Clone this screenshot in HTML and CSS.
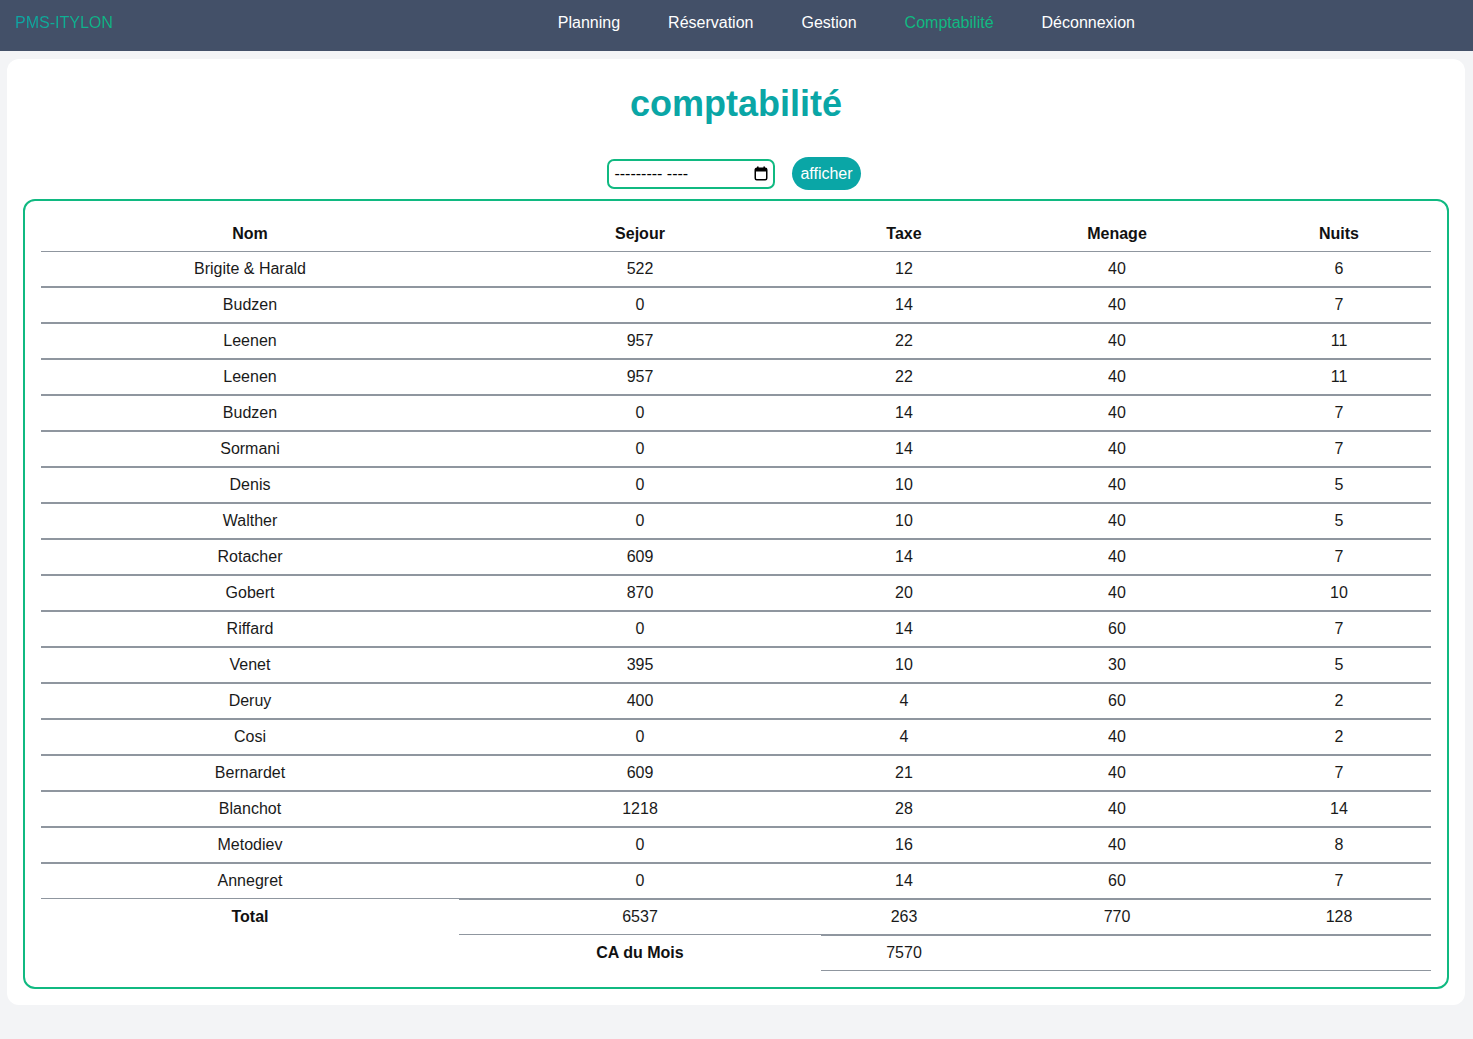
FILE: index.html
```html
<!DOCTYPE html>
<html lang="fr">
<head>
<meta charset="utf-8">
<title>PMS-ITYLON - comptabilité</title>
<link rel="stylesheet" href="styles.css">
</head>
<body>
<nav class="topbar">
  <a class="brand" href="#">PMS-ITYLON</a>
  <ul class="menu">
    <li><a href="#">Planning</a></li>
    <li><a href="#">Réservation</a></li>
    <li><a href="#">Gestion</a></li>
    <li><a class="active" href="#">Comptabilité</a></li>
    <li><a href="#">Déconnexion</a></li>
  </ul>
</nav>
<main class="page">
  <section class="card">
    <h1 class="title">comptabilité</h1>
    <form class="filter">
      <label class="month">
        <input class="month-text" type="text" value="--------- ----" aria-label="mois">
        <svg class="cal" width="14" height="15" viewBox="0 0 14 15" aria-hidden="true">
          <rect x="3" y="0.5" width="1.6" height="3" fill="#000"/>
          <rect x="9.4" y="0.5" width="1.6" height="3" fill="#000"/>
          <rect x="1.25" y="2.25" width="11.5" height="11.5" rx="1.5" fill="none" stroke="#000" stroke-width="1.5"/>
          <rect x="1.5" y="2.5" width="11" height="3" fill="#000"/>
        </svg>
      </label>
      <button class="btn" type="button">afficher</button>
    </form>
    <div class="box">
      <table class="grid">
        <thead>
          <tr>
            <th class="c-nom">Nom</th>
            <th class="c-sejour">Sejour</th>
            <th class="c-taxe">Taxe</th>
            <th class="c-menage">Menage</th>
            <th class="c-nuits">Nuits</th>
          </tr>
        </thead>
        <tbody>
          <tr><td>Brigite &amp; Harald</td><td>522</td><td>12</td><td>40</td><td>6</td></tr>
          <tr><td>Budzen</td><td>0</td><td>14</td><td>40</td><td>7</td></tr>
          <tr><td>Leenen</td><td>957</td><td>22</td><td>40</td><td>11</td></tr>
          <tr><td>Leenen</td><td>957</td><td>22</td><td>40</td><td>11</td></tr>
          <tr><td>Budzen</td><td>0</td><td>14</td><td>40</td><td>7</td></tr>
          <tr><td>Sormani</td><td>0</td><td>14</td><td>40</td><td>7</td></tr>
          <tr><td>Denis</td><td>0</td><td>10</td><td>40</td><td>5</td></tr>
          <tr><td>Walther</td><td>0</td><td>10</td><td>40</td><td>5</td></tr>
          <tr><td>Rotacher</td><td>609</td><td>14</td><td>40</td><td>7</td></tr>
          <tr><td>Gobert</td><td>870</td><td>20</td><td>40</td><td>10</td></tr>
          <tr><td>Riffard</td><td>0</td><td>14</td><td>60</td><td>7</td></tr>
          <tr><td>Venet</td><td>395</td><td>10</td><td>30</td><td>5</td></tr>
          <tr><td>Deruy</td><td>400</td><td>4</td><td>60</td><td>2</td></tr>
          <tr><td>Cosi</td><td>0</td><td>4</td><td>40</td><td>2</td></tr>
          <tr><td>Bernardet</td><td>609</td><td>21</td><td>40</td><td>7</td></tr>
          <tr><td>Blanchot</td><td>1218</td><td>28</td><td>40</td><td>14</td></tr>
          <tr><td>Metodiev</td><td>0</td><td>16</td><td>40</td><td>8</td></tr>
          <tr><td>Annegret</td><td>0</td><td>14</td><td>60</td><td>7</td></tr>
        </tbody>
        <tfoot>
          <tr><th>Total</th><td>6537</td><td>263</td><td>770</td><td>128</td></tr>
          <tr><th></th><th>CA du Mois</th><td>7570</td><td></td><td></td></tr>
        </tfoot>
      </table>
    </div>
  </section>
</main>
</body>
</html>
```

FILE: styles.css
```css
html, body {
  margin: 0;
  padding: 0;
}

body {
  background: #f3f4f6;
  font-family: "Liberation Sans", Arial, sans-serif;
  font-size: 16px;
  color: #111;
}

.topbar {
  display: flex;
  align-items: flex-start;
  height: 51px;
  box-sizing: border-box;
  padding: 14px 15px 0;
  background: #435068;
}

.brand {
  font-size: 16px;
  line-height: 18px;
  text-decoration: none;
  background: linear-gradient(90deg, #0ea5a5 0%, #10b981 100%);
  -webkit-background-clip: text;
  background-clip: text;
  color: transparent;
}

.menu {
  display: flex;
  list-style: none;
  margin: 0 0 0 421px;
  padding: 0;
}

.menu a {
  display: block;
  padding: 0 24px;
  line-height: 18px;
  color: #ffffff;
  text-decoration: none;
}

.menu a.active {
  color: #10b981;
}

.page {
  padding: 8px 8px 0 7px;
}

.card {
  background: #ffffff;
  border-radius: 12px;
  padding: 16px;
}

.title {
  margin: 8px 0 0;
  text-align: center;
  font-size: 36px;
  line-height: 41px;
  font-weight: 700;
  color: #0aa6a6;
}

.filter {
  display: flex;
  justify-content: center;
  align-items: center;
  gap: 17px;
  margin: 33px 0 9px;
  padding-right: 4px;
}

.month {
  box-sizing: border-box;
  display: flex;
  align-items: center;
  width: 168px;
  height: 30px;
  border: 2px solid #10b981;
  border-radius: 7px;
  padding: 0 5px 0 5px;
  background: #fff;
}

.month-text {
  flex: 1;
  min-width: 0;
  border: none;
  outline: none;
  padding: 0;
  margin: 0;
  font-family: "Liberation Sans", Arial, sans-serif;
  font-size: 16px;
  color: #000;
  background: transparent;
}

.cal {
  flex: none;
  display: block;
}

.btn {
  box-sizing: border-box;
  height: 33px;
  padding: 0 8px;
  border: none;
  border-radius: 9999px;
  background: #0aa6a6;
  color: #ffffff;
  font-family: "Liberation Sans", Arial, sans-serif;
  font-size: 16px;
}

.box {
  border: 2px solid #10b981;
  border-radius: 12px;
  padding: 16px;
}

.grid {
  width: 100%;
  border-collapse: separate;
  border-spacing: 0;
  table-layout: fixed;
}

.grid th,
.grid td {
  padding: 8px 0;
  line-height: 18px;
  text-align: center;
  font-size: 16px;
}

.grid th {
  font-weight: 700;
  color: #111;
}

.grid td {
  border-top: 1px solid #8f969f;
  border-bottom: 1px solid #8f969f;
  color: #1a1a1a;
}

.c-nom { width: 418px; }
.c-sejour { width: 362px; }
.c-taxe { width: 166px; }
.c-menage { width: 260px; }
.c-nuits { width: 184px; }
```
